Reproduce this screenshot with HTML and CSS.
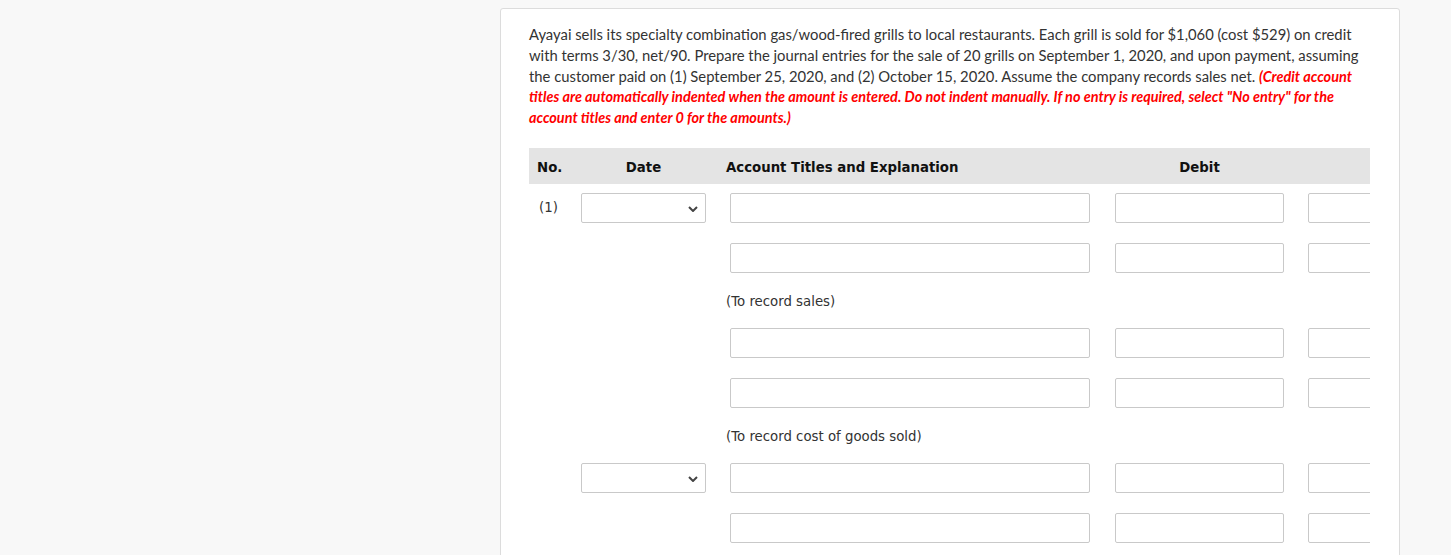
FILE: index.html
```html
<!DOCTYPE html>
<html lang="en">
<head>
<meta charset="utf-8">
<title>Journal entries</title>
<link rel="stylesheet" href="styles.css">
</head>
<body>
<div class="card">
  <p class="question">Ayayai sells its specialty combination gas/wood-fired grills to local restaurants. Each grill is sold for $1,060 (cost $529) on credit with terms 3/30, net/90. Prepare the journal entries for the sale of 20 grills on September 1, 2020, and upon payment, assuming the customer paid on (1) September 25, 2020, and (2) October 15, 2020. Assume the company records sales net. <em class="note">(Credit account titles are automatically indented when the amount is entered. Do not indent manually. If no entry is required, select "No entry" for the account titles and enter 0 for the amounts.)</em></p>

  <div class="journal">
    <div class="grid head">
      <div class="c-no">No.</div>
      <div class="c-date">Date</div>
      <div class="c-acct">Account Titles and Explanation</div>
      <div class="c-amt">Debit</div>
      <div class="c-amt c-credit"></div>
    </div>

    <div class="grid row first">
      <div class="c-no num">(1)</div>
      <div class="c-date"><div class="sel"><select><option></option></select><svg class="chev" width="10" height="6" viewBox="0 0 10 6"><path d="M1 1l4 4 4-4" fill="none" stroke="#444" stroke-width="2"/></svg></div></div>
      <div class="c-acct"><input class="in acct" type="text"></div>
      <div class="c-amt"><input class="in amt" type="text"></div>
      <div class="c-amt c-credit"><input class="in amt" type="text"></div>
    </div>
    <div class="grid row">
      <div class="c-no"></div>
      <div class="c-date"></div>
      <div class="c-acct"><input class="in acct" type="text"></div>
      <div class="c-amt"><input class="in amt" type="text"></div>
      <div class="c-amt c-credit"><input class="in amt" type="text"></div>
    </div>
    <div class="grid expl">
      <div class="c-no"></div>
      <div class="c-date"></div>
      <div class="c-acct">(To record sales)</div>
    </div>

    <div class="grid row">
      <div class="c-no"></div>
      <div class="c-date"></div>
      <div class="c-acct"><input class="in acct" type="text"></div>
      <div class="c-amt"><input class="in amt" type="text"></div>
      <div class="c-amt c-credit"><input class="in amt" type="text"></div>
    </div>
    <div class="grid row">
      <div class="c-no"></div>
      <div class="c-date"></div>
      <div class="c-acct"><input class="in acct" type="text"></div>
      <div class="c-amt"><input class="in amt" type="text"></div>
      <div class="c-amt c-credit"><input class="in amt" type="text"></div>
    </div>
    <div class="grid expl">
      <div class="c-no"></div>
      <div class="c-date"></div>
      <div class="c-acct">(To record cost of goods sold)</div>
    </div>

    <div class="grid row">
      <div class="c-no"></div>
      <div class="c-date"><div class="sel"><select><option></option></select><svg class="chev" width="10" height="6" viewBox="0 0 10 6"><path d="M1 1l4 4 4-4" fill="none" stroke="#444" stroke-width="2"/></svg></div></div>
      <div class="c-acct"><input class="in acct" type="text"></div>
      <div class="c-amt"><input class="in amt" type="text"></div>
      <div class="c-amt c-credit"><input class="in amt" type="text"></div>
    </div>
    <div class="grid row">
      <div class="c-no"></div>
      <div class="c-date"></div>
      <div class="c-acct"><input class="in acct" type="text"></div>
      <div class="c-amt"><input class="in amt" type="text"></div>
      <div class="c-amt c-credit"><input class="in amt" type="text"></div>
    </div>
  </div>
</div>
</body>
</html>
```
FILE: styles.css
```css
html, body {
  margin: 0;
  padding: 0;
  background: #f8f8f8;
  height: 100%;
  overflow: hidden;
}
body {
  font-family: Lato, "Noto Sans", sans-serif;
}
.card {
  margin: 8px 0 0 500px;
  width: 900px;
  height: 700px;
  background: #fff;
  border: 1px solid #dcdcdc;
  border-radius: 3px;
  padding: 15px 28px 0 28px;
  box-sizing: border-box;
}
.question {
  margin: 0;
  width: 841px;
  font-size: 14.8px;
  line-height: 20.75px;
  color: #333;
}
.note {
  color: #f00;
  font-weight: 700;
  font-style: italic;
  font-size: 14.45px;
  line-height: 1;
}
.journal {
  margin-top: 20px;
  width: 841px;
  overflow: hidden;
  font-family: "DejaVu Sans", Verdana, sans-serif;
  font-size: 13.3px;
}
.grid {
  display: grid;
  grid-template-columns: 42px 145px 384px 199px 199px;
  width: 969px;
}
.head {
  background: #e4e4e4;
  height: 36px;
  box-sizing: border-box;
  padding-top: 3px;
  align-items: center;
  font-weight: 700;
  color: #111;
}
.head .c-no { padding-left: 8px; }
.head .c-date { text-align: center; }
.head .c-acct { padding-left: 10px; }
.head .c-amt { padding-left: 15px; width: 169px; text-align: center; }
.head .c-credit { padding-left: 9px; }
.row {
  height: 30px;
  margin-top: 20px;
  align-items: center;
}
.row.first { margin-top: 9px; }
.expl + .row { margin-top: 0; }
.num {
  padding-left: 10px;
  color: #333;
}
.sel {
  position: relative;
  margin-left: 10px;
  width: 125px;
  height: 30px;
}
.sel select {
  appearance: none;
  -webkit-appearance: none;
  width: 125px;
  height: 30px;
  border: 1px solid #c9c9c9;
  border-radius: 2px;
  background: #fff;
  box-sizing: border-box;
  margin: 0;
}
.chev {
  position: absolute;
  right: 8px;
  top: 13px;
}
.in {
  display: block;
  height: 30px;
  border: 1px solid #c9c9c9;
  border-radius: 2px;
  box-sizing: border-box;
  margin: 0;
  padding: 0 6px;
  background: #fff;
}
.acct { width: 360px; margin-left: 14px; }
.amt { width: 169px; margin-left: 15px; }
.c-credit .amt { margin-left: 9px; }
.expl {
  height: 55px;
  align-items: center;
  color: #333;
}
.expl .c-acct { padding-left: 10px; padding-top: 2px; }
```
